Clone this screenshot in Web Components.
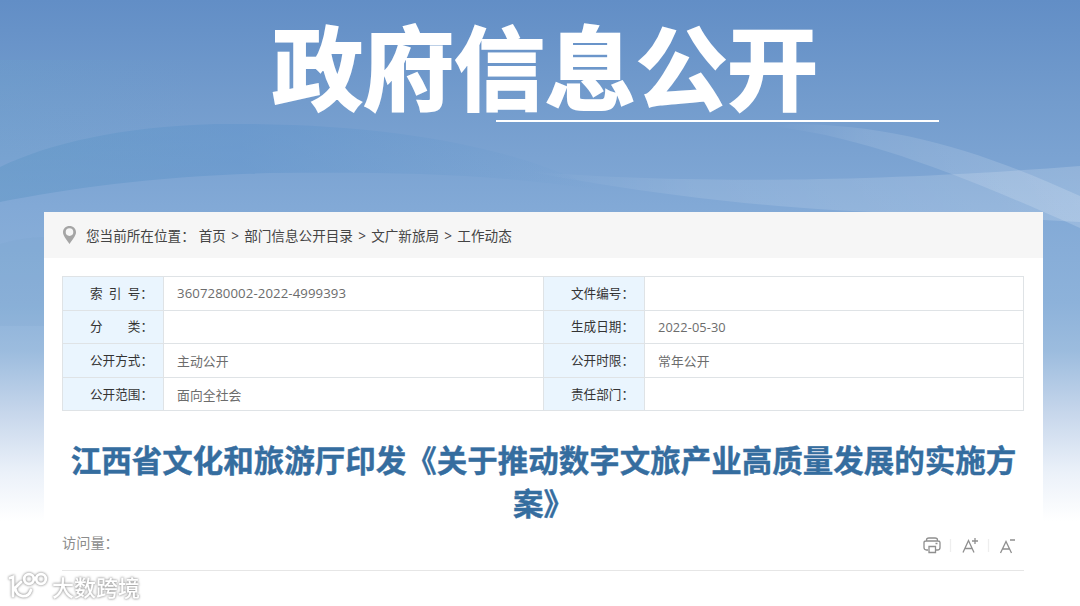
<!DOCTYPE html>
<html lang="zh-CN">
<head>
<meta charset="UTF-8">
<title>政府信息公开</title>
<style>
  body {
    margin: 0;
    font-family: "Open Sans", "Noto Sans CJK SC", sans-serif;
    background: #fff;
  }
</style>
</head>
<body>
<gov-page>
  <page-banner slot="banner">政府信息公开</page-banner>
  <bread-crumb slot="crumb" path="首页,部门信息公开目录,文广新旅局,工作动态">您当前所在位置：</bread-crumb>
  <info-table></info-table>
  <article-title>江西省文化和旅游厅印发《关于推动数字文旅产业高质量发展的实施方<br>案》</article-title>
  <article-tools>访问量：</article-tools>
  <site-mark slot="mark">大数跨境</site-mark>
</gov-page>

<script>
class GovPage extends HTMLElement {
    constructor() {
        super();
        this.attachShadow({ mode: 'open' });
        this.shadowRoot.innerHTML = `
            <style>
                :host {
                    display: grid;
                    grid-template: 606px / 1080px;
                    overflow: hidden;
                }
                .sky, .content, .mark { grid-area: 1 / 1; }
                .sky { display: block; width: 1080px; height: 606px; }
                .content { display: flex; flex-direction: column; }
                .card {
                    width: 999px;
                    height: 394px;
                    margin-left: 44px;
                    background: #fff;
                }
                .inner { padding: 18px 18px 0; }
                .mark { align-self: end; justify-self: start; }
            </style>
            <svg class="sky" viewBox="0 0 1080 606">
                <defs>
                    <linearGradient id="base" x1="0" y1="0" x2="0" y2="1">
                        <stop offset="0" stop-color="#628ec6"/>
                        <stop offset=".17" stop-color="#739ccd"/>
                        <stop offset=".34" stop-color="#82a9d6"/>
                        <stop offset=".5" stop-color="#8db2da"/>
                        <stop offset=".58" stop-color="#9cbcde"/>
                        <stop offset=".68" stop-color="#c6d6eb"/>
                        <stop offset=".78" stop-color="#ebf1f9"/>
                        <stop offset=".86" stop-color="#fff"/>
                    </linearGradient>
                    <linearGradient id="arc" x1="0" y1="0" x2="1" y2="0">
                        <stop offset="0" stop-color="#6197c6" stop-opacity=".5"/>
                        <stop offset=".4" stop-color="#6094cb" stop-opacity=".5"/>
                        <stop offset="1" stop-color="#6197cb" stop-opacity="0"/>
                    </linearGradient>
                    <linearGradient id="teal" x1="0" y1="0" x2="1" y2="0">
                        <stop offset="0" stop-color="#6ba3cc" stop-opacity=".5"/>
                        <stop offset="1" stop-color="#6ba3cc" stop-opacity="0"/>
                    </linearGradient>
                    <linearGradient id="ray" x1="0" y1="0" x2="1" y2="0">
                        <stop offset="0" stop-color="#fff" stop-opacity="0"/>
                        <stop offset=".3" stop-color="#fff" stop-opacity=".1"/>
                        <stop offset="1" stop-color="#fff" stop-opacity=".17"/>
                    </linearGradient>
                </defs>
                <rect width="1080" height="606" fill="url(#base)"/>
                <rect y="60" width="200" height="100" fill="url(#teal)" opacity=".4"/>
                <path d="M0 167C50 143 120 127 215 124C400 122 520 150 600 190C480 172 380 172 270 173C160 176 70 188 0 202Z" fill="url(#arc)"/>
                <path d="M0 244Q20 238 44 237V326H0Z" fill="#6f9fcb" opacity=".15"/>
                <path d="M525 171C640 181 820 186 1080 166V222L930 214C760 210 640 192 525 171Z" fill="url(#ray)"/>
                <path d="M770 126C860 136 950 170 1080 228V196C990 155 900 124 790 124Z" fill="url(#ray)"/>
            </svg>
            <div class="content">
                <slot name="banner"></slot>
                <div class="card">
                    <slot name="crumb"></slot>
                    <div class="inner"><slot></slot></div>
                </div>
            </div>
            <div class="mark"><slot name="mark"></slot></div>
        `;
    }
}

class PageBanner extends HTMLElement {
    constructor() {
        super();
        this.attachShadow({ mode: 'open' });
        this.shadowRoot.innerHTML = `
            <style>
                :host { display: block; height: 212px; }
                h1 {
                    margin: 0;
                    padding: 15px 0 0 272px;
                    height: 105px;
                    line-height: 107px;
                    font-size: 91px;
                    font-weight: 700;
                    color: #fff;
                    white-space: nowrap;
                    -webkit-text-stroke: 2px #fff;
                }
                .line { width: 443px; height: 2px; margin-left: 495.5px; background: #fff; }
            </style>
            <h1><slot></slot></h1>
            <div class="line"></div>
        `;
    }
}

class BreadCrumb extends HTMLElement {
    constructor() {
        super();
        this.attachShadow({ mode: 'open' });
    }

    connectedCallback() {
        const items = this.getAttribute('path').split(',');
        this.shadowRoot.innerHTML = `
            <style>
                :host {
                    display: flex;
                    align-items: center;
                    height: 46px;
                    padding-left: 18px;
                    background: #f6f6f6;
                    color: #444;
                    font-size: 13.6px;
                    white-space: nowrap;
                }
                svg { width: 15px; height: 20px; margin-right: 9px; }
                .path { margin-left: 4px; word-spacing: 1.7px; }
            </style>
            <svg viewBox="0 0 14 20">
                <path fill="#a5a5a5" fill-rule="evenodd" d="M7 1C3.300 1 .5 3.700 .5 7.300C.5 11 4.400 15 7 19C9.600 15 13.500 11 13.500 7.300C13.500 3.700 10.700 1 7 1ZM7 3.300A3.800 3.800 0 1 1 7 10.900A3.800 3.800 0 1 1 7 3.300Z"/>
            </svg>
            <slot></slot>
            <span class="path">${items.join(' &gt; ')}</span>
        `;
    }
}

const rows = [
    ['索 引 号：', '3607280002-2022-4999393', '文件编号：', ''],
    ['分　　类：', '', '生成日期：', '2022-05-30'],
    ['公开方式：', '主动公开', '公开时限：', '常年公开'],
    ['公开范围：', '面向全社会', '责任部门：', '']
];

class InfoTable extends HTMLElement {
    constructor() {
        super();
        this.attachShadow({ mode: 'open' });
    }

    connectedCallback() {
        const cells = rows.map(row => row.map((text, i) =>
            `<div class="${i % 2 ? 'value' : 'label'}">${text}</div>`).join('')).join('');

        this.shadowRoot.innerHTML = `
            <style>
                :host {
                    display: grid;
                    grid-template-columns: 101px 380px 101px 379px;
                    grid-auto-rows: 33.6px;
                    width: 961px;
                    border-top: 1px solid #dfe3e6;
                    border-left: 1px solid #dfe3e6;
                    font-size: 12.8px;
                    white-space: pre;
                }
                div {
                    box-sizing: border-box;
                    display: flex;
                    align-items: center;
                    border-right: 1px solid #dfe3e6;
                    border-bottom: 1px solid #dfe3e6;
                }
                .label {
                    padding: 0 0 2px 27px;
                    background: #eaf5fe;
                    color: #333;
                    font-size: 12.6px;
                    word-spacing: 3px;
                }
                .value { padding-left: 13px; color: #6c6c6c; letter-spacing: .1px; }
                .value:nth-child(-n+8) { font-size: 13.200px; }
            </style>
            ${cells}
        `;
    }
}

class ArticleTitle extends HTMLElement {
    constructor() {
        super();
        this.attachShadow({ mode: 'open' });
        this.shadowRoot.innerHTML = `
            <style>
                :host { display: block; margin-top: 28px; }
                h2 {
                    margin: 0;
                    font-size: 30.5px;
                    line-height: 43px;
                    color: #356d9f;
                    text-align: center;
                    white-space: nowrap;
                    -webkit-text-stroke: .4px #356d9f;
                }
            </style>
            <h2><slot></slot></h2>
        `;
    }
}

class ArticleTools extends HTMLElement {
    constructor() {
        super();
        this.attachShadow({ mode: 'open' });
        this.shadowRoot.innerHTML = `
            <style>
                :host {
                    display: flex;
                    align-items: center;
                    justify-content: space-between;
                    width: 962px;
                    height: 44px;
                    padding-bottom: 1px;
                    border-bottom: 1px solid #e6e6e6;
                    font-size: 14.2px;
                    color: #8c8c8c;
                }
                .text { padding-bottom: 11px; }
                svg { width: 102px; height: 28px; }
            </style>
            <span class="text"><slot></slot></span>
            <svg viewBox="0 0 102 28" fill="none" stroke="#8f8f8f" stroke-width="1.300">
                <path d="M6 17H4.500Q2 17 2 14.500V9.500Q2 8 4 8H16Q18 8 18 9.500V14.500Q18 17 15.500 17H14M4.500 8V7Q4.500 5 7 5H13Q15.500 5 15.500 7V8M7 13.500H13.500V19.500H7ZM13.500 10.500H15.500"/>
                <path d="M28.500 6V19M66.500 6V19" stroke="#eee"/>
                <path d="M41 19.500L46.500 7.500L52 19.500M43 15.500H50M50 8H56M53 5V11"/>
                <path d="M78.500 20L84 8.500L89.500 20M80.500 16H87.500M88 7H93"/>
            </svg>
        `;
    }
}

class SiteMark extends HTMLElement {
    constructor() {
        super();
        this.attachShadow({ mode: 'open' });
        this.shadowRoot.innerHTML = `
            <style>
                :host {
                    display: flex;
                    align-items: center;
                    height: 40px;
                    padding-left: 8px;
                    font-size: 22px;
                    font-weight: 500;
                    color: #fff;
                    filter: drop-shadow(0 0 1px #999) drop-shadow(0 0 1px #ccc);
                }
                svg { width: 42px; height: 32px; margin-right: 2px; }
            </style>
            <svg viewBox="0 0 42 32" fill="none" stroke="#fff" stroke-width="2.800" stroke-linecap="round">
                <path d="M2 8L5 7V26M13 12L7 18C9 28 20 29 23 20"/>
                <circle cx="21" cy="9" r="4.800"/>
                <circle cx="33" cy="9" r="4.800"/>
            </svg>
            <slot></slot>
        `;
    }
}

customElements.define('gov-page', GovPage);
customElements.define('page-banner', PageBanner);
customElements.define('bread-crumb', BreadCrumb);
customElements.define('info-table', InfoTable);
customElements.define('article-title', ArticleTitle);
customElements.define('article-tools', ArticleTools);
customElements.define('site-mark', SiteMark);
</script>
</body>
</html>
